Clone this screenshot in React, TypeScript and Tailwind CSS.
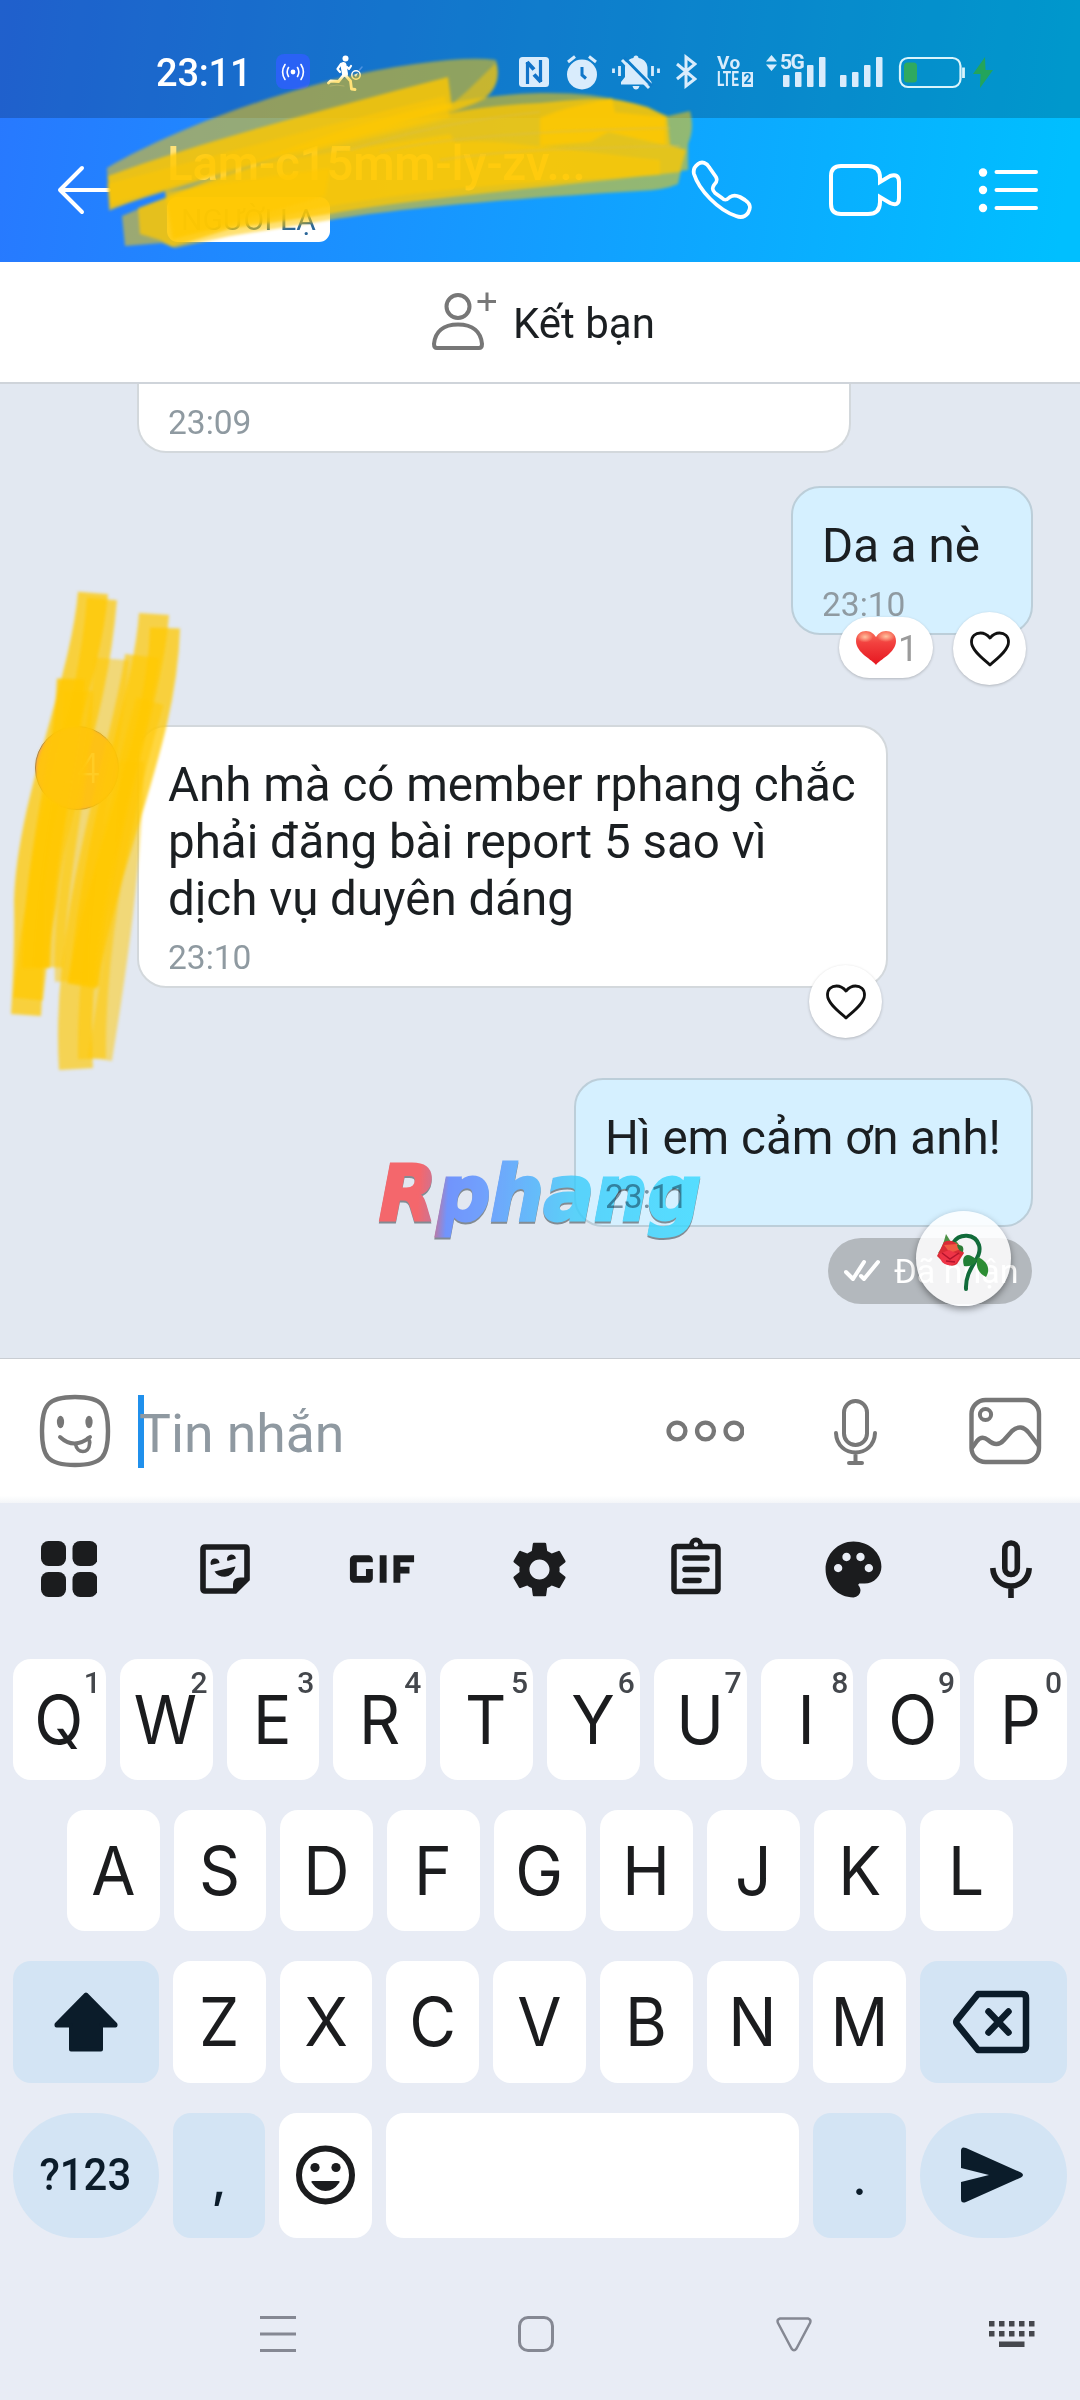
import React from 'react';
import { MdGif, MdPalette, MdSettings } from 'react-icons/md';

const TOP_KEYS = ['Q', 'W', 'E', 'R', 'T', 'Y', 'U', 'I', 'O', 'P'];
const HOME_KEYS = ['A', 'S', 'D', 'F', 'G', 'H', 'J', 'K', 'L'];
const BOTTOM_KEYS = ['Z', 'X', 'C', 'V', 'B', 'N', 'M'];

const SignalBars: React.FC = () => (
  <svg width="43" height="30" viewBox="0 0 43 30" fill="currentColor">
    <rect x="0" y="18" width="6.5" height="12" rx="1" />
    <rect x="12" y="15" width="6.5" height="15" rx="1" />
    <rect x="24" y="8" width="6.5" height="22" rx="1" />
    <rect x="36" y="0" width="6.5" height="30" rx="1" />
  </svg>
);

const StatusBar: React.FC = () => (
  <div className="flex h-[118px] items-start bg-black/20 pl-[156px] pt-[49px] text-[#d9ecfc]">
    <span className="mt-[2px] w-[120px] text-[38px] font-medium leading-[45px] tracking-[-0.2px] text-white">23:11</span>
    <div className="mt-[5px] flex h-[35px] w-[34px] items-center justify-center rounded-[8px] bg-[#2a62f5]">
      <svg width="24" height="18" viewBox="0 0 24 18" fill="none" stroke="#fff" strokeWidth="1.6" strokeLinecap="round">
        <circle cx="12" cy="9" r="2.4" fill="#fff" stroke="none" />
        <path d="M7.5 4.5Q4.8 9 7.5 13.5M16.5 4.5Q19.2 9 16.5 13.5M4 1.5Q-.8 9 4 16.5M20 1.5Q24.8 9 20 16.5" />
      </svg>
    </div>
    <svg className="ml-[17px] mt-[6px]" width="36" height="37" viewBox="0 0 36 37" fill="none" stroke="#fff" strokeLinecap="round" strokeLinejoin="round">
      <circle cx="18.5" cy="3.5" r="3" fill="#fff" stroke="none" />
      <path d="M16.5 10L18 19" strokeWidth="6" />
      <path d="M14 9L10.5 14L13 17M20 12L22 14L24 11" strokeWidth="2.2" />
      <path d="M16 21L11.5 26.5L3.5 26L1.5 28M19 21L23.5 26L24.5 34L28 34.5" strokeWidth="2.8" />
      <circle cx="29" cy="20" r="4.2" strokeWidth="1.5" />
      <path d="M27 20L31 18L29 22Z" fill="#fff" stroke="none" />
      <path d="M32.5 15L35 12" stroke="#4f93e0" strokeWidth="1.5" />
      <path d="M3 31Q10 29 17 31" stroke="#4f93e0" strokeWidth="1" />
    </svg>

    {/* NFC */}
    <svg className="ml-[156px] mt-[8px]" width="30" height="30" viewBox="0 0 30 30">
      <rect width="30" height="30" rx="3.5" fill="currentColor" />
      <path d="M8.5 27V5M21.5 25V3" fill="none" stroke="#1173c8" strokeWidth="3.2" />
      <path d="M8 5L15 12.5M22 25L15 17.5" stroke="#1173c8" strokeWidth="4" />
    </svg>
    {/* Alarm */}
    <svg className="ml-[17px] mt-[5px]" width="32" height="36" viewBox="0 0 32 36">
      <circle cx="16" cy="20.5" r="15" fill="currentColor" />
      <path d="M2 8L9 2.5M30 8L23 2.5" stroke="currentColor" strokeWidth="3" />
      <path d="M16 13V21L20 24.5" fill="none" stroke="#0f76c9" strokeWidth="3" />
    </svg>
    {/* Muted, vibrating */}
    <svg className="ml-[14px] mt-[5px]" width="48" height="36" viewBox="0 0 48 36">
      <path d="M24 1.5C25.5 1.5 26.5 2.5 26.5 4C33 5 35.5 10 35.5 14V23L39.5 28V30.5H9V28L13 23V14C13 10 15 5 21.5 4C21.5 2.5 22.5 1.5 24 1.5ZM20.5 32H27.5Q26.5 35.5 24 35.5T20.5 32Z" fill="currentColor" />
      <path d="M1.5 14.5V19M7.5 12V22M40.5 12V22M46.5 14.5V19" stroke="currentColor" strokeWidth="2.8" />
      <path d="M12 3.5L40 32" stroke="#0d7bc9" strokeWidth="3" />
      <path d="M10 6L37 34" stroke="currentColor" strokeWidth="3" />
    </svg>
    {/* Bluetooth */}
    <svg className="ml-[16px] mt-[5px]" width="21" height="35" viewBox="0 0 21 35" fill="none" stroke="currentColor" strokeWidth="3">
      <path d="M1 10L19 25L10 32V3L19 10L1 25" />
    </svg>
    <div className="ml-[20px] mt-[5px] flex w-[38px] flex-col font-bold">
      <span className="h-[17px] text-[19px] leading-[17px] tracking-[0.5px]">Vo</span>
      <span className="flex h-[17px] items-center text-[20px] leading-[17px]">
        <span className="inline-block w-[25px] origin-left scale-x-[0.68]">LTE</span>
        <span className="flex h-[15px] w-[11px] shrink-0 items-center justify-center bg-[#d9ecfc] text-[14px] text-[#0a80c8]">2</span>
      </span>
    </div>
    <div className="relative ml-[28px] mt-[8px]">
      <SignalBars />
      <div className="absolute left-[-17px] top-[-3px] flex h-[17px] items-center gap-[3px] bg-[#088acb] pr-[1px]">
        <svg width="11" height="16" viewBox="0 0 11 16" fill="currentColor">
          <path d="M5.5 0L11 6.5H0ZM5.5 16L11 9.5H0Z" />
        </svg>
        <span className="w-[22px] text-[21px] font-bold leading-[17px] tracking-[-1.5px]">5G</span>
      </div>
    </div>
    <div className="ml-[14px] mt-[8px]">
      <SignalBars />
    </div>
    <svg className="ml-[15px] mt-[7px]" width="96" height="33" viewBox="0 0 96 33">
      <rect x="2" y="2" width="60.5" height="29" rx="8" fill="none" stroke="#d9f4fc" strokeWidth="2.2" />
      <rect x="6" y="6.5" width="13" height="20" rx="3.5" fill="#2fa95f" />
      <path d="M65.5 11.5V22" stroke="#d9f4fc" strokeWidth="2.8" />
      <path d="M87 1L75 18H82.5L82 32L95 14H87.5Z" fill="#23a45c" />
    </svg>
  </div>
);

const ChatHeader: React.FC = () => (
  <div className="flex h-[144px] items-start text-white">
    <svg className="ml-[55px] mt-[46px]" width="56" height="52" viewBox="0 0 56 52" fill="none" stroke="currentColor" strokeWidth="4" strokeLinecap="round" strokeLinejoin="round">
      <path d="M54 26H5M27 4L5 26L27 48" />
    </svg>
    <div className="ml-[56px] mt-[18px] flex w-[437px] flex-col items-start">
      <h1 className="whitespace-nowrap text-[47.5px] font-medium leading-[57px] tracking-[-0.2px]">Lam-c15mm-ly-zv...</h1>
      <span className="mt-[4px] flex h-[45px] w-[163px] items-center justify-center rounded-[11px] bg-white text-[30px] text-[#2b6799]">
        NGƯỜI LẠ
      </span>
    </div>
    <svg className="ml-[87px] mt-[42px]" width="62" height="60" viewBox="0 0 62 60" fill="none" stroke="currentColor" strokeWidth="3.8" strokeLinejoin="round">
      <path d="M7 4C11 1 16 3 18 7L25 17C27 21 25 23 23 25C21 28 21 30 24 33L31 38C34 41 36 40 39 37C42 35 45 35 49 37L54 40C60 44 60 48 57 53C54 57 50 58 45 56C27 50 8 30 3 14C2 10 3 7 7 4Z" />
    </svg>
    <svg className="ml-[74px] mt-[44px]" width="76" height="56" viewBox="0 0 76 56" fill="none" stroke="currentColor" strokeWidth="4" strokeLinejoin="miter">
      <path d="M14 4H41Q53 4 53 16V20L63 14Q72 11 72 20V36Q72 45 63 41L53 35V40Q53 52 41 52H14Q4 52 4 42V14Q4 4 14 4Z" />
    </svg>
    <svg className="ml-[75px] mt-[50px]" width="62" height="46" viewBox="0 0 62 46" fill="currentColor">
      <circle cx="5" cy="4.5" r="4.2" />
      <circle cx="5" cy="22" r="4.2" />
      <circle cx="5" cy="40" r="4.2" />
      <path d="M18.5 4H58M18.5 22H58M18.5 40H58" stroke="currentColor" strokeWidth="4" strokeLinecap="round" />
    </svg>
  </div>
);

// Highlighter strokes over the contact name
const NameScribble: React.FC = () => (
  <svg className="pointer-events-none absolute left-[90px] top-[40px]" width="620" height="220" viewBox="90 40 620 220">
    <g fill="#ffc800" style={{ filter: 'blur(1.6px)' }}>
      <path opacity=".53" d="M107 168C180 125 310 78 415 64Q470 56 496 60Q503 84 485 99C420 132 250 150 109 211Z" />
      <path opacity=".5" d="M466 92L496 63Q502 84 485 97C450 115 440 114 400 122L452 104Z" />
      <path opacity=".8" d="M108 176C200 142 330 108 448 77L452 108C350 138 220 172 110 209Z" />
      <path opacity=".5" d="M107 184C200 160 330 124 445 96L450 118C350 144 200 176 110 204Z" />
      <path opacity=".55" d="M122 216C250 162 400 96 540 93C610 92 640 105 668 116L690 111Q695 128 688 144V170L681 171L678 184Q665 190 640 191C520 198 400 208 330 220L230 236L175 248L162 243L125 246Z" />
      <path opacity=".75" d="M138 208C250 168 400 108 540 103C590 98 610 96 648 107L667 117L670 145L686 150L680 172C560 186 400 200 330 214L230 229L172 247L160 240L140 234Z" />
      <path opacity=".55" d="M165 190C230 165 350 150 450 134L455 142C500 138 560 150 660 160V175C520 182 420 190 320 208L174 238Z" />
      <path opacity=".6" d="M165 192L330 168L325 196L262 214L172 240Z" />
      <path opacity=".8" d="M540 118C570 105 590 104 612 98L618 127L590 142L540 146ZM590 110L665 117V145L600 130Z" />
    </g>
    <g fill="none" stroke="#d8bf50" strokeWidth="2.5" opacity=".35" style={{ filter: 'blur(1px)' }}>
      <path d="M350 150C420 128 480 118 540 112M380 152C450 136 560 130 670 128M440 160C520 148 600 148 680 146" />
    </g>
  </svg>
);

// Highlighter strokes over the sender's avatar
const AvatarScribble: React.FC = () => (
  <svg className="pointer-events-none absolute left-0 top-[197px]" width="200" height="500" viewBox="0 580 200 500">
    <g fill="none" stroke="#ffc800" strokeWidth="30" style={{ filter: 'blur(1.8px)' }}>
      <path opacity=".75" d="M93 592C86 680 32 800 29 900Q30 950 26 1014" />
      <path opacity=".7" d="M102 598C92 720 52 800 42 900Q34 940 28 998" />
      <path opacity=".85" d="M71 678C68 760 38 850 36 967" strokeWidth="28" />
      <path opacity=".6" d="M78 690C78 770 54 850 48 966" />
      <path opacity=".5" d="M112 658C104 760 68 880 72 980" strokeWidth="34" />
      <path opacity=".7" d="M154 613C148 700 100 810 84 984" />
      <path opacity=".75" d="M165 627C162 740 108 840 82 985" strokeWidth="30" />
      <path opacity=".65" d="M142 655C132 740 66 910 76 1068" strokeWidth="34" />
      <path opacity=".55" d="M150 700C124 790 90 930 92 1058" strokeWidth="28" />
      <path opacity=".5" d="M132 760C130 860 116 960 100 1058" strokeWidth="24" />
      <circle cx="77" cy="767" r="41" fill="#ffc50c" stroke="none" opacity=".78" />
    </g>
  </svg>
);

const HeartButton: React.FC<{ className: string }> = ({ className }) => (
  <button className={`absolute flex h-[73px] w-[73px] items-center justify-center rounded-full bg-white shadow-[0_1px_3px_rgba(0,0,0,0.22)] ${className}`}>
    <svg width="42" height="38" viewBox="0 0 42 38" fill="none" stroke="#111" strokeWidth="2.8" strokeLinejoin="round">
      <path d="M21 35C16 30 2.5 21 2.5 12C2.5 6 6.5 3 11.5 3C16 3 18.5 5 21 8C23.5 5 26 3 30.5 3C35.5 3 39.5 6 39.5 12C39.5 21 26 30 21 35Z" />
    </svg>
  </button>
);

interface BubbleProps {
  mine?: boolean;
  time: string;
  timeClassName?: string;
  className: string;
  children: React.ReactNode;
  reactions?: React.ReactNode;
}

const Bubble: React.FC<BubbleProps> = ({ mine, time, timeClassName = '', className, children, reactions }) => (
  <div
    className={`relative rounded-[29px] border-2 px-[29px] pt-[30px] ${
      mine ? 'border-[#bcced9] bg-[#d5f0ff]' : 'border-[#d3d8dc] bg-white'
    } ${className}`}
  >
    <p className="whitespace-nowrap text-[47.5px] leading-[57px] text-[#1b1f22]">{children}</p>
    <p className={`mt-[9px] text-[33.5px] leading-[41px] text-[#8f9aa1] ${timeClassName}`}>{time}</p>
    {reactions}
  </div>
);

const WiltedRose: React.FC = () => (
  <svg className="mt-[6px]" width="54" height="58" viewBox="0 0 54 58">
    <path d="M16 10C22 0 38 0 42 12C46 26 28 34 29 56" fill="none" stroke="#116b3a" strokeWidth="4" strokeLinecap="round" />
    <path d="M40 27C29 17 24 24 27 33C34 34 38 31 40 27Z" fill="#1f7f35" />
    <path d="M41 24C50 28 54 36 49 44C41 40 38 33 41 24Z" fill="#2c8d33" />
    <path d="M7 8L4 16L1 20L14 17L26 17L20 9L14 9L9 1Z" fill="#4d9146" />
    <path d="M7 9Q15 5 22 13L27 20L20 31Q15 35 7 30L0 23Z" fill="#d92b35" />
    <path d="M7 12L20 11L24 16L13 20Z" fill="#f05a43" />
    <path d="M2 21L12 17L23 22L19 30Q11 35 5 29Z" fill="#ee3447" />
    <path d="M5 20L13 26L22 20M9 28L18 29" fill="none" stroke="#b3142d" strokeWidth="1.5" />
    <path d="M20 12Q28 11 26 19Q21 18 20 12Z" fill="#2d7c36" />
  </svg>
);

const Conversation: React.FC = () => (
  <main className="relative flex h-[976px] flex-col overflow-hidden border-t-2 border-[#cfd4da] bg-[#e2e8f1]">
    <div className="ml-[137px] h-[69px] w-[714px] rounded-b-[29px] border-2 border-t-0 border-[#d3d8dc] bg-white pl-[29px] pt-[18px]">
      <p className="text-[33.5px] leading-[42px] text-[#8f9aa1]">23:09</p>
    </div>

    <Bubble
      mine
      time="23:10"
      className="mr-[47px] mt-[33px] h-[149px] w-[242px] self-end"
      reactions={
        <>
          <div className="absolute left-[46px] top-[129px] flex h-[61px] w-[94px] items-center justify-center rounded-full bg-white shadow-[0_1px_3px_rgba(0,0,0,0.22)]">
            <svg className="ml-[2px] mt-[1px]" width="40" height="36" viewBox="0 0 40 36">
              <defs>
                <linearGradient id="heart" x1="0" y1="0" x2="0" y2="1">
                  <stop offset="0" stopColor="#f9705a" />
                  <stop offset=".35" stopColor="#f2413f" />
                  <stop offset="1" stopColor="#e6161f" />
                </linearGradient>
                <radialGradient id="gloss">
                  <stop offset="0" stopColor="#ffc3a0" />
                  <stop offset="1" stopColor="#ffc3a0" stopOpacity="0" />
                </radialGradient>
              </defs>
              <path d="M20 35C17 30 0 23 0 11C0 4 5 1 10 1C15 1 18 4 20 7C22 4 25 1 30 1C35 1 40 4 40 11C40 23 23 30 20 35Z" fill="url(#heart)" />
              <ellipse cx="9" cy="7" rx="8" ry="5.5" fill="url(#gloss)" />
              <ellipse cx="30" cy="6.5" rx="9" ry="5.5" fill="url(#gloss)" />
            </svg>
            <span className="ml-[2px] mt-[3px] text-[36px] leading-none text-[#9b9b9b]">1</span>
          </div>
          <HeartButton className="right-[5px] top-[124px]" />
        </>
      }
    >
      Da a nè
    </Bubble>

    <div className="mt-[90px] flex items-start">
      <div className="ml-[35px] mt-px flex h-[84px] w-[84px] items-center justify-center rounded-full border border-[#8a7060] bg-[#f59a6a]">
        <span className="text-[42px] font-light tracking-[3px] text-white">L4</span>
      </div>
      <Bubble time="23:10" className="ml-[18px] h-[263px] w-[751px]" reactions={<HeartButton className="right-[4px] top-[238px]" />}>
        Anh mà có member rphang chắc
        <br />
        phải đăng bài report 5 sao vì
        <br />
        dịch vụ duyên dáng
      </Bubble>
    </div>

    <Bubble mine time="23:11" timeClassName="relative z-10 mix-blend-multiply" className="mr-[47px] mt-[90px] h-[149px] w-[459px] self-end">
      Hì em cảm ơn anh!
    </Bubble>

    <div className="relative mr-[48px] mt-[11px] flex h-[66px] w-[204px] items-center self-end rounded-full bg-[#b3b8bd] pl-[16px]">
      <svg width="38" height="24" viewBox="0 0 38 24" fill="none" stroke="#fff" strokeWidth="4" strokeLinecap="round" strokeLinejoin="round">
        <path d="M2 13L9 20L20 3M17 17L20 20L34 3" />
      </svg>
      <span className="ml-[12px] whitespace-nowrap text-[34px] leading-none text-white">Đã nhận</span>
      <div className="absolute left-[88px] top-[-27px] flex h-[95px] w-[95px] items-center justify-center rounded-full bg-white/85 shadow-[0_3px_7px_rgba(0,0,0,0.4)]">
        <WiltedRose />
      </div>
    </div>

    <AvatarScribble />

    {/* Watermark */}
    <svg className="pointer-events-none absolute left-[370px] top-[765px] opacity-80" width="350" height="110" viewBox="0 0 350 110">
      <defs>
        <linearGradient id="mark" gradientUnits="userSpaceOnUse" x1="10" y1="40" x2="335" y2="62">
          <stop offset=".12" stopColor="#f9484c" />
          <stop offset=".17" stopColor="#c45880" />
          <stop offset=".21" stopColor="#5580ff" />
          <stop offset=".32" stopColor="#5590ff" />
          <stop offset=".6" stopColor="#3accfb" />
          <stop offset="1" stopColor="#36daff" />
        </linearGradient>
      </defs>
      <text
        x="9"
        y="71"
        textLength="322"
        lengthAdjust="spacingAndGlyphs"
        fontFamily="DejaVu Sans"
        fontWeight="700"
        fontStyle="italic"
        fontSize="77"
        fill="url(#mark)"
        stroke="url(#mark)"
        strokeWidth="3"
        style={{ filter: 'drop-shadow(0px 2px 0.5px #6b757c)' }}
      >
        Rphang
      </text>
    </svg>
  </main>
);

const Composer: React.FC = () => (
  <div className="flex h-[145px] items-center border-t border-[#c9cdd3] bg-gradient-to-b from-white from-95% to-[#f3f5f8] text-[#777]">
    <svg className="ml-[38px]" width="74" height="74" viewBox="0 0 74 74" fill="none" stroke="currentColor" strokeWidth="4.4" strokeLinecap="round">
      <path d="M37 3C65 3 70 12 70 37C70 62 65 71 37 71C9 71 4 62 4 37C4 12 9 3 37 3Z" />
      <ellipse cx="22.5" cy="28" rx="3.6" ry="6.2" fill="currentColor" stroke="none" />
      <ellipse cx="51" cy="28" rx="3.6" ry="6.2" fill="currentColor" stroke="none" />
      <path d="M22 43Q36 56 52 43" strokeWidth="4" />
      <path d="M37.5 50C39 60 51 60 51.5 50Q52.5 47 49.5 44.5" strokeWidth="3.6" />
    </svg>
    <div className="ml-[26px] flex h-[73px] flex-1 items-center border-l-[6px] border-[#2090ec]">
      <span className="ml-[-5px] mt-[4px] text-[53.5px] leading-[73px] text-[#8f99a1]">Tin nhắn</span>
    </div>
    <svg width="80" height="24" viewBox="0 0 80 24" fill="none" stroke="currentColor" strokeWidth="4.4">
      <circle cx="13" cy="12" r="8.4" />
      <circle cx="41.5" cy="12" r="8.4" />
      <circle cx="70" cy="12" r="8.4" />
    </svg>
    <svg className="ml-[88px]" width="46" height="68" viewBox="0 0 46 68" fill="none" stroke="currentColor" strokeWidth="4" strokeLinecap="round">
      <rect x="12" y="4" width="23" height="44" rx="11.5" />
      <path d="M4 36C5 62 42 62 43 36M23.5 56V66M17 66H30" />
    </svg>
    <svg className="ml-[90px] mr-[38px]" width="74" height="68" viewBox="0 0 74 68" fill="none" stroke="currentColor" strokeWidth="4.4">
      <rect x="3.5" y="3" width="67.5" height="62" rx="14" />
      <circle cx="17.5" cy="17.5" r="5.6" strokeWidth="4" />
      <path d="M4 51L9 44Q14 38 20 43Q29 51 36 43L44 34Q53 26 61 36L71 49" />
    </svg>
  </div>
);

const Key: React.FC<{ label: string; hint?: string }> = ({ label, hint }) => (
  <button className="relative flex min-w-0 flex-1 items-center justify-center rounded-[18px] bg-white font-['Inter',sans-serif] text-[67.5px] leading-none text-[#1b1c1e]">
    <span className="-ml-px scale-x-[0.95]">{label}</span>
    {hint && (
      <span className="absolute right-[5px] top-[7px] font-['Roboto',sans-serif] text-[30px] font-medium leading-[34px] text-[#44474c]">{hint}</span>
    )}
  </button>
);

const ToolbarItem: React.FC<{ children: React.ReactNode }> = ({ children }) => (
  <button className="flex w-[110px] shrink-0 items-center justify-center">{children}</button>
);

const KeyboardToolbar: React.FC = () => (
  <div className="flex h-[132px] items-center gap-[47px] pl-[13px] text-[#1b1c1e]">
    <ToolbarItem>
      <svg className="ml-[2px]" width="56" height="56" viewBox="0 0 56 56" fill="currentColor">
        <rect width="25" height="25" rx="7.5" />
        <rect x="31.5" width="25" height="25" rx="7.5" />
        <rect y="31" width="25" height="25" rx="7.5" />
        <rect x="31.5" y="31" width="25" height="25" rx="7.5" />
      </svg>
    </ToolbarItem>
    <ToolbarItem>
      <svg width="50" height="50" viewBox="0 0 50 50">
        <path d="M5 3H45Q47 3 47 5V35L35 47H5Q3 47 3 45V5Q3 3 5 3Z" fill="none" stroke="currentColor" strokeWidth="5.6" />
        <path d="M33 48V40Q33 33.5 40 33.5H49L36 49Z" fill="currentColor" />
        <path d="M14.5 27.5L35.5 22.5Q33 32 25 32.8Q18 33 14.5 27.5ZM11 21A4.5 4.5 0 1 1 19.5 19ZM27.5 17A4.5 4.5 0 1 1 36 14.5Z" fill="currentColor" />
      </svg>
    </ToolbarItem>
    <ToolbarItem>
      <MdGif size={110} />
    </ToolbarItem>
    <ToolbarItem>
      <MdSettings size={67} />
    </ToolbarItem>
    <ToolbarItem>
      <svg className="mt-[-4px]" width="50" height="62" viewBox="0 0 50 62" fill="none" stroke="currentColor" strokeWidth="5.5" strokeLinecap="round">
        <rect x="3" y="10.5" width="44" height="45" rx="2.5" />
        <path d="M18 9A7 7.5 0 0 1 32 9Z" fill="currentColor" stroke="none" />
        <circle cx="25" cy="8.5" r="2.2" fill="#e8ecf4" stroke="none" />
        <path d="M14 22H36M14 33.5H36M14 44.5H28" />
      </svg>
    </ToolbarItem>
    <ToolbarItem>
      <MdPalette size={67} />
    </ToolbarItem>
    <ToolbarItem>
      <svg className="ml-[2px]" width="42" height="58" viewBox="0 0 42 58" fill="none" stroke="currentColor" strokeWidth="5.6">
        <rect x="14.8" y="3" width="12.5" height="31.5" rx="6.2" />
        <path d="M2.8 28C4 52 38 52 39.2 28M21 46V58" />
      </svg>
    </ToolbarItem>
  </div>
);

const Keyboard: React.FC = () => (
  <div className="flex h-[896px] flex-col bg-[#e8ecf5]">
    <KeyboardToolbar />
    <div className="mt-[24px] flex h-[121px] gap-[14px] px-[13px]">
      {TOP_KEYS.map((k, i) => (
        <Key key={k} label={k} hint={String((i + 1) % 10)} />
      ))}
    </div>
    <div className="mt-[30px] flex h-[121px] gap-[14px] px-[67px]">
      {HOME_KEYS.map((k) => (
        <Key key={k} label={k} />
      ))}
    </div>
    <div className="mt-[30px] flex h-[122px] gap-[14px] px-[13px] text-[#0b1c2a]">
      <button className="flex w-[146px] items-center justify-center rounded-[18px] bg-[#d3e4f4]">
        <svg width="64" height="60" viewBox="0 0 64 60" fill="currentColor" stroke="currentColor" strokeWidth="4" strokeLinejoin="round">
          <path d="M32 2.5L61.5 32.5V33.5H47V57.5H17V33.5H2.5V32.5Z" />
        </svg>
      </button>
      {BOTTOM_KEYS.map((k) => (
        <Key key={k} label={k} />
      ))}
      <button className="flex w-[147px] items-center justify-center rounded-[18px] bg-[#d3e4f4]">
        <svg className="ml-[-6px]" width="78" height="64" viewBox="0 0 78 64" fill="none" stroke="currentColor" strokeWidth="6.5" strokeLinecap="round" strokeLinejoin="round">
          <path d="M26 4H70Q74 4 74 8V56Q74 60 70 60H26L5 34Q3.5 32 5 30Z" />
          <path d="M36.5 21.5L56.5 42.5M56.5 21.5L36.5 42.5" />
        </svg>
      </button>
    </div>
    <div className="mt-[30px] flex h-[125px] gap-[14px] px-[13px] text-[#0b1c2a]">
      <button className="flex w-[146px] items-center justify-center rounded-full bg-[#d3e4f4] pb-[2px] pr-[2px] text-[45px] font-medium leading-none">
        <span className="scale-x-[0.93]">?123</span>
      </button>
      <button className="flex w-[92px] items-center justify-center rounded-[18px] bg-[#d3e4f4] pt-[6px] font-['Inter',sans-serif] text-[50px] font-medium leading-none">,</button>
      <button className="flex w-[93px] items-center justify-center rounded-[18px] bg-white text-[#1b1c1e]">
        <svg className="mt-[-2px]" width="60" height="60" viewBox="0 0 60 60">
          <circle cx="29.5" cy="30" r="26.5" fill="none" stroke="currentColor" strokeWidth="6" />
          <circle cx="19" cy="22.5" r="4.6" fill="currentColor" />
          <circle cx="40" cy="22.5" r="4.6" fill="currentColor" />
          <path d="M16.5 36H42.5Q44.5 36 43 38Q37.5 46 29.5 46T16 38Q14.5 36 16.5 36Z" fill="currentColor" />
        </svg>
      </button>
      <button className="flex-1 rounded-[18px] bg-white" />
      <button className="flex w-[93px] items-center justify-center rounded-[18px] bg-[#d3e4f4] pt-[5px] font-['Inter',sans-serif] text-[46px] font-medium leading-none">.</button>
      <button className="flex w-[147px] items-center justify-center rounded-full bg-[#d3e4f4]">
        <svg className="ml-[-3px] mt-[-2px]" width="64" height="56" viewBox="0 0 64 56" fill="currentColor">
          <path d="M1 4Q1 -1 6 1L61 25.5Q65 28 61 30.5L6 55Q1 57 1 52V35L29 28L1 21Z" />
        </svg>
      </button>
    </div>
    <nav className="mt-[78px] flex h-[36px] items-center pl-[260px] text-[#858893]">
      <svg width="36" height="36" viewBox="0 0 36 36" stroke="currentColor" strokeWidth="3">
        <path d="M0 1.5H36M0 18H36M0 34.5H36" />
      </svg>
      <div className="ml-[222px] h-[36px] w-[36px] rounded-[10px] border-[3px] border-[#858893]" />
      <svg className="ml-[222px]" width="36" height="36" viewBox="0 0 36 36" fill="none" stroke="currentColor" strokeWidth="2.5" strokeLinejoin="round">
        <path d="M4 2.5H32Q35.5 3.5 34 7L20.5 32.5Q18 36 15.5 32.5L2 7Q.5 3.5 4 2.5Z" />
      </svg>
      <svg className="ml-[177px]" width="46" height="26" viewBox="0 0 46 26" fill="#45474d">
        {[0, 10, 20, 30, 40].map((x) => (
          <g key={x}>
            <rect x={x} y="0" width="5.5" height="5.5" />
            <rect x={x} y="10" width="5.5" height="5.5" />
          </g>
        ))}
        <rect x="10" y="20.5" width="25.5" height="5.5" />
      </svg>
    </nav>
  </div>
);

const App: React.FC = () => (
  <div className="flex h-[2400px] w-[1080px] flex-col overflow-hidden bg-[#e8ecf5] font-['Roboto',sans-serif]">
    <header className="relative h-[262px] shrink-0 bg-[linear-gradient(98deg,#2878ff_0%,#00bfff_98%)]">
      <StatusBar />
      <ChatHeader />
      <NameScribble />
    </header>
    <div className="flex h-[120px] shrink-0 items-center bg-white pl-[430px]">
      <svg width="68" height="62" viewBox="0 0 68 62" fill="none" stroke="#777" strokeWidth="4">
        <circle cx="28" cy="15.5" r="11.5" />
        <path d="M7 57Q4 57 4 53C5 41 13 33.5 28 33.5S51 41 52 53Q52 57 49 57Z" />
        <path d="M57 1.5V20M47.5 10.5H66" strokeWidth="3" />
      </svg>
      <span className="ml-[15px] mt-[3px] text-[42px] leading-none text-[#1b1f22]">Kết bạn</span>
    </div>
    <Conversation />
    <Composer />
    <Keyboard />
  </div>
);

export default App;
